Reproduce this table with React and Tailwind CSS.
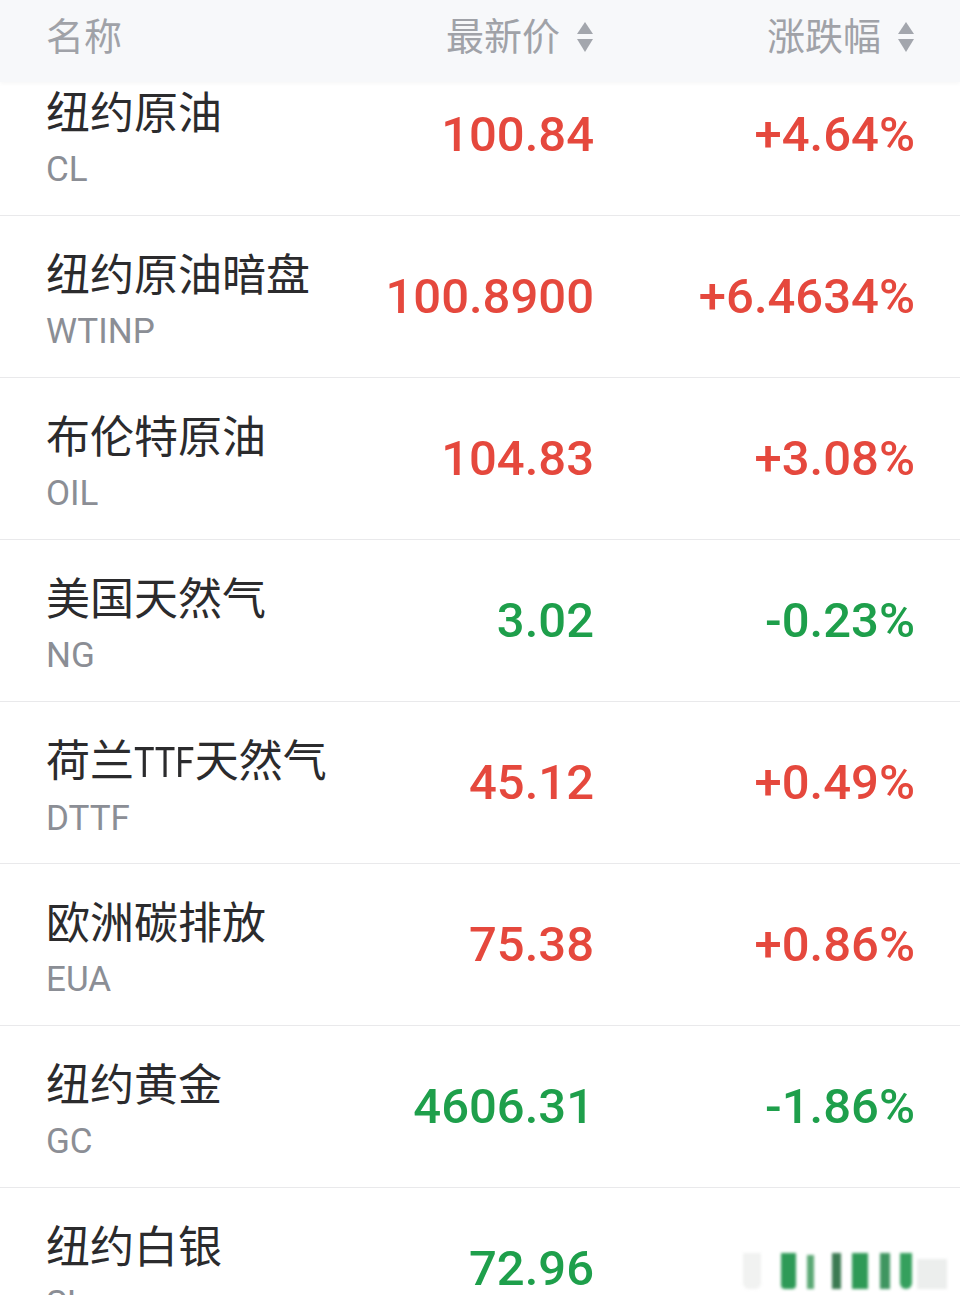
import React from "react";

const rows = [
  { name: "纽约原油", code: "CL", price: "100.84", change: "+4.64%", up: true },
  { name: "纽约原油暗盘", code: "WTINP", price: "100.8900", change: "+6.4634%", up: true },
  { name: "布伦特原油", code: "OIL", price: "104.83", change: "+3.08%", up: true },
  { name: "美国天然气", code: "NG", price: "3.02", change: "-0.23%", up: false },
  {
    name: (
      <>
        荷兰
        <span className="inline-block text-[42px] scale-x-[0.82] origin-left -mr-[13px]">TTF</span>
        天然气
      </>
    ),
    code: "DTTF",
    price: "45.12",
    change: "+0.49%",
    up: true,
  },
  { name: "欧洲碳排放", code: "EUA", price: "75.38", change: "+0.86%", up: true },
  { name: "纽约黄金", code: "GC", price: "4606.31", change: "-1.86%", up: false },
  { name: "纽约白银", code: "SI", price: "72.96", change: null, up: false },
];

const font = { fontFamily: '"Roboto", "Noto Sans CJK SC", sans-serif' };

const SortIcon = () => (
  <svg width="18" height="32" viewBox="0 0 18 32" className="ml-[16px]">
    <path d="M9 1 L17 13 L1 13 Z" fill="#a3a6ad" />
    <path d="M1 18 L17 18 L9 31 Z" fill="#a3a6ad" />
  </svg>
);

// blurred watermark where the last change value should be
const Smudge = () => (
  <div className="flex items-end justify-end h-[40px] -mr-[32px] blur-[1.5px]">
    <div className="w-[18px] h-[36px] bg-[#f1f2f1] rounded-b-[6px]" />
    <div className="w-[15px] h-[36px] bg-[#2e9a57] ml-[20px] rounded-b-[4px]" />
    <div className="w-[7px] h-[34px] bg-[#5aa874] ml-[11px]" />
    <div className="w-[9px] h-[36px] bg-[#3c7a52] ml-[18px]" />
    <div className="w-[16px] h-[36px] bg-[#2f9a56] ml-[11px]" />
    <div className="w-[10px] h-[36px] bg-[#3f9560] ml-[12px]" />
    <div className="w-[12px] h-[36px] bg-[#35a05d] ml-[10px] rounded-b-[6px]" />
    <div className="w-[30px] h-[30px] bg-[#eceeed] ml-[5px]" />
  </div>
);

export default function App() {
  return (
    <div className="w-[960px] h-[1295px] overflow-hidden bg-white" style={font}>
      <div className="relative z-10 h-[82px] bg-[#f7f8fa] flex items-center pb-[8px] pl-[46px] pr-[45px] text-[38px] text-[#a0a2a8] shadow-[0_2px_4px_rgba(0,0,0,0.03)]">
        <div className="flex-1">名称</div>
        <div className="w-[260px] flex items-center justify-end">
          最新价
          <SortIcon />
        </div>
        <div className="w-[321px] flex items-center justify-end">
          涨跌幅
          <SortIcon />
        </div>
      </div>

      <div className="-mt-[28px]">
        {rows.map((r) => {
          const color = r.up ? "text-[#e5483d]" : "text-[#1e9f4b]";
          return (
            <div
              key={r.code}
              className="h-[162px] flex items-center pl-[46px] pr-[45px] border-b border-[#e9e9eb]"
            >
              <div className="flex-1 min-w-0 flex flex-col pt-[10px] whitespace-nowrap">
                <div className="text-[44px] leading-[52px] text-[#2b2b2d]">{r.name}</div>
                <div className="text-[35px] leading-[42px] mt-[9px] text-[#8b8e95]">{r.code}</div>
              </div>
              <div className={`w-[260px] shrink-0 text-right text-[49px] font-medium ${color}`}>
                {r.price}
              </div>
              <div className={`w-[321px] shrink-0 text-right text-[49px] font-medium ${color}`}>
                {r.change ? r.change : <Smudge />}
              </div>
            </div>
          );
        })}
      </div>
    </div>
  );
}
